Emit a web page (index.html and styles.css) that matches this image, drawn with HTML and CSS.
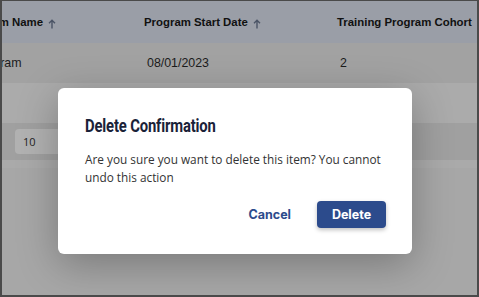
FILE: index.html
```html
<!DOCTYPE html>
<html lang="en">
<head>
  <meta charset="UTF-8">
  <meta name="viewport" content="width=device-width, initial-scale=1.0">
  <title>Delete Confirmation</title>
  <link rel="stylesheet" href="styles.css">
</head>
<body>
  <div class="frame">
    <div class="table">
      <div class="thead">
        <div class="cell col-name">Program Name <svg class="sort" width="8" height="10" viewBox="0 0 8 10"><path d="M4 9.5V1.2M1 4.2L4 1.2L7 4.2" fill="none" stroke="#4b5466" stroke-width="1.4"/></svg></div>
        <div class="cell col-date">Program Start Date <svg class="sort" width="8" height="10" viewBox="0 0 8 10"><path d="M4 9.5V1.2M1 4.2L4 1.2L7 4.2" fill="none" stroke="#4b5466" stroke-width="1.4"/></svg></div>
        <div class="cell col-cohort">Training Program Cohort</div>
      </div>
      <div class="trow">
        <div class="cell col-name">Program</div>
        <div class="cell col-date">08/01/2023</div>
        <div class="cell col-cohort">2</div>
      </div>
    </div>
    <div class="gap-band"></div>
    <div class="pager">
      <span class="pager-label">Rows per page:</span>
      <div class="page-size">10</div>
    </div>
    <div class="pager-edge"></div>

    <div class="backdrop">
      <div class="dialog">
        <div class="dialog-title">Delete Confirmation</div>
        <div class="dialog-text">Are you sure you want to delete this item? You cannot undo this action</div>
        <div class="dialog-actions">
          <button class="btn btn-cancel">Cancel</button>
          <button class="btn btn-delete">Delete</button>
        </div>
      </div>
    </div>
  </div>
</body>
</html>
```

FILE: styles.css
```css
body, html { margin: 0; height: 100%; }

body {
  background-color: #a6a6a6;
  font-family: "Liberation Sans", Arial, sans-serif;
}

.frame {
  position: relative;
  box-sizing: border-box;
  width: 479px;
  height: 297px;
  border: solid #4a4a4a;
  border-width: 1px 2px 2px 2px;
  background-color: #a7a7a7;
  overflow: hidden;
  display: flex;
  flex-direction: column;
}

.thead, .trow {
  display: flex;
  align-items: center;
  white-space: nowrap;
}

.thead {
  height: 42px;
  background-color: #9a9ea7;
  font-weight: bold;
  font-size: 11.4px;
  color: #111;
}

.trow {
  height: 40px;
  background-color: #a2a2a2;
  font-size: 12.4px;
  color: #1c1c1c;
}

.cell {
  display: flex;
  align-items: center;
}

.col-name {
  width: 182px;
  margin-left: -40px;
  flex-shrink: 0;
}

.trow .col-name {
  padding-left: 12px;
  width: 170px;
}

.col-date {
  width: 193px;
  flex-shrink: 0;
}

.trow .col-date {
  padding-left: 3px;
  width: 190px;
}

.trow .col-cohort {
  padding-left: 3px;
}

.sort {
  margin-left: 5px;
  margin-top: 3px;
}

.gap-band {
  height: 40px;
  background-color: #ababab;
}

.pager {
  height: 37px;
  background-color: #a0a0a0;
  display: flex;
  align-items: center;
  font-family: "Open Sans", sans-serif;
  font-size: 11px;
  color: #222;
}

.pager-label {
  margin-left: -78px;
  width: 91px;
  white-space: nowrap;
}

.page-size {
  width: 60px;
  height: 25px;
  box-sizing: border-box;
  padding-left: 8px;
  display: flex;
  align-items: center;
  background-color: #b2b2b2;
  border-radius: 4px;
}

.pager-edge {
  height: 8px;
  background-color: #aaaaaa;
}

.backdrop {
  position: absolute;
  inset: 0;
  padding: 87px 0 0 56px;
}

.dialog {
  width: 354px;
  height: 166px;
  box-sizing: border-box;
  padding: 26px 26px 26px 27px;
  background-color: #fff;
  border-radius: 6px;
  box-shadow: 0 10px 40px rgba(0, 0, 0, 0.28);
  display: flex;
  flex-direction: column;
}

.dialog-title {
  font-family: Roboto, sans-serif;
  font-weight: bold;
  font-size: 19px;
  letter-spacing: -0.2px;
  color: #1a2238;
  margin-bottom: 13px;
  transform: scaleX(0.78);
  transform-origin: left center;
  white-space: nowrap;
}

.dialog-text {
  font-family: "Open Sans", sans-serif;
  font-size: 11.8px;
  line-height: 18px;
  color: #333;
}

.dialog-actions {
  margin-top: auto;
  display: flex;
  justify-content: flex-end;
  align-items: center;
  gap: 26px;
}

.btn {
  font-family: Inter, sans-serif;
  font-weight: bold;
  font-size: 12.5px;
  border: none;
  background: none;
  cursor: pointer;
  padding: 0;
}

.btn-cancel {
  color: #2c4b8c;
}

.btn-delete {
  width: 69px;
  height: 27px;
  color: #fff;
  background-color: #2c4b8c;
  border-radius: 4px;
  box-shadow: 0 2px 4px rgba(0, 0, 0, 0.25);
}
```
